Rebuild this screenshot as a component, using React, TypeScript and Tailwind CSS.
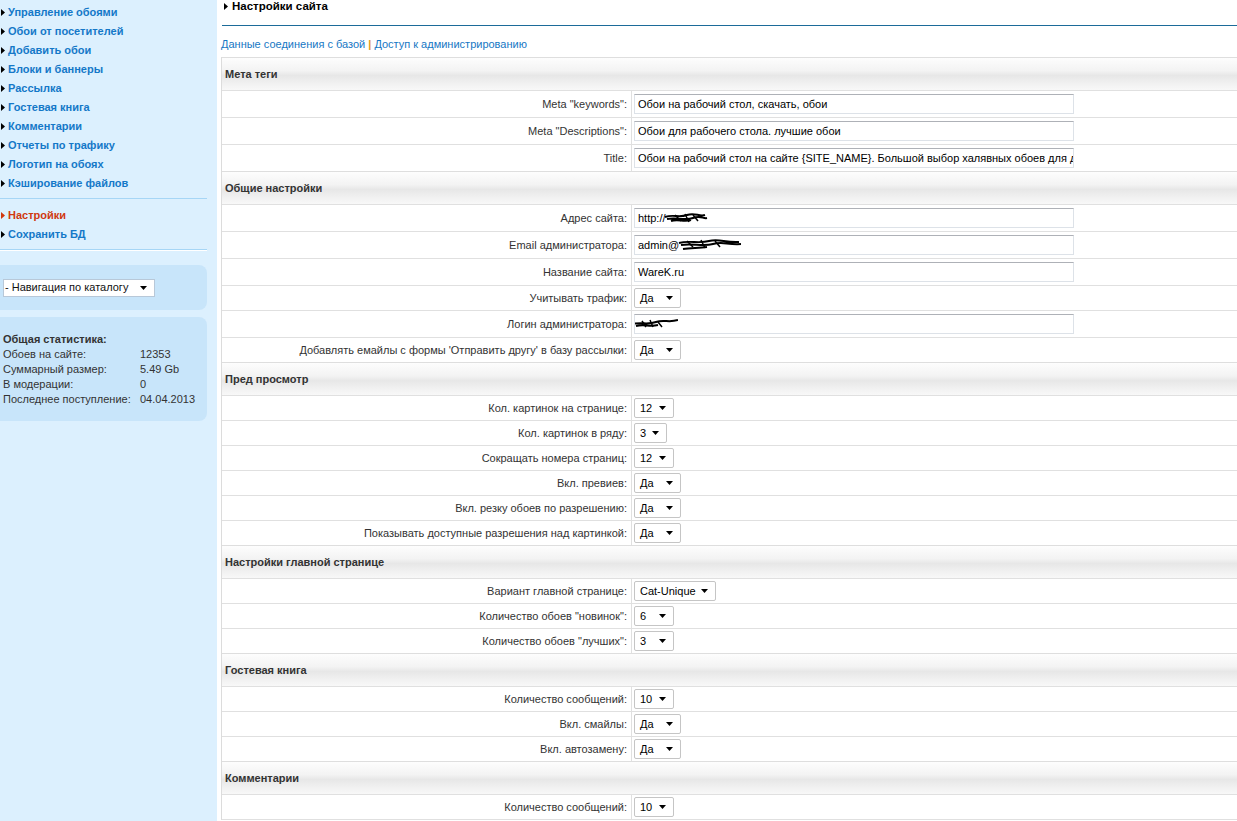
import React from "react";

type Row =
  | { label: string; kind: "input"; value: string; redact?: "url" | "email" | "login" }
  | { label: string; kind: "select"; value: string; width: string };

interface Section {
  title: string;
  rows: Row[];
}

const sections: Section[] = [
  {
    title: "Мета теги",
    rows: [
      { label: 'Meta "keywords":', kind: "input", value: "Обои на рабочий стол, скачать, обои" },
      { label: 'Meta "Descriptions":', kind: "input", value: "Обои для рабочего стола. лучшие обои" },
      {
        label: "Title:",
        kind: "input",
        value: "Обои на рабочий стол на сайте {SITE_NAME}. Большой выбор халявных обоев для д",
      },
    ],
  },
  {
    title: "Общие настройки",
    rows: [
      { label: "Адрес сайта:", kind: "input", value: "http://", redact: "url" },
      { label: "Email администратора:", kind: "input", value: "admin@", redact: "email" },
      { label: "Название сайта:", kind: "input", value: "WareK.ru" },
      { label: "Учитывать трафик:", kind: "select", value: "Да", width: "w-[47px]" },
      { label: "Логин администратора:", kind: "input", value: "", redact: "login" },
      {
        label: "Добавлять емайлы с формы 'Отправить другу' в базу рассылки:",
        kind: "select",
        value: "Да",
        width: "w-[47px]",
      },
    ],
  },
  {
    title: "Пред просмотр",
    rows: [
      { label: "Кол. картинок на странице:", kind: "select", value: "12", width: "w-[40px]" },
      { label: "Кол. картинок в ряду:", kind: "select", value: "3", width: "w-[33px]" },
      { label: "Сокращать номера страниц:", kind: "select", value: "12", width: "w-[40px]" },
      { label: "Вкл. превиев:", kind: "select", value: "Да", width: "w-[47px]" },
      { label: "Вкл. резку обоев по разрешению:", kind: "select", value: "Да", width: "w-[47px]" },
      { label: "Показывать доступные разрешения над картинкой:", kind: "select", value: "Да", width: "w-[47px]" },
    ],
  },
  {
    title: "Настройки главной странице",
    rows: [
      { label: "Вариант главной странице:", kind: "select", value: "Cat-Unique", width: "w-[82px]" },
      { label: 'Количество обоев "новинок":', kind: "select", value: "6", width: "w-[40px]" },
      { label: 'Количество обоев "лучших":', kind: "select", value: "3", width: "w-[40px]" },
    ],
  },
  {
    title: "Гостевая книга",
    rows: [
      { label: "Количество сообщений:", kind: "select", value: "10", width: "w-[40px]" },
      { label: "Вкл. смайлы:", kind: "select", value: "Да", width: "w-[47px]" },
      { label: "Вкл. автозамену:", kind: "select", value: "Да", width: "w-[47px]" },
    ],
  },
  {
    title: "Комментарии",
    rows: [{ label: "Количество сообщений:", kind: "select", value: "10", width: "w-[40px]" }],
  },
];

const navLinks = [
  "Управление обоями",
  "Обои от посетителей",
  "Добавить обои",
  "Блоки и баннеры",
  "Рассылка",
  "Гостевая книга",
  "Комментарии",
  "Отчеты по трафику",
  "Логотип на обоях",
  "Кэширование файлов",
];

const stats = [
  ["Обоев на сайте:", "12353"],
  ["Суммарный размер:", "5.49 Gb"],
  ["В модерации:", "0"],
  ["Последнее поступление:", "04.04.2013"],
];

const Arrow = () => (
  <svg width="7" height="4" viewBox="0 0 7 4" className="shrink-0">
    <path d="M0 0h7L3.5 4z" fill="#000" />
  </svg>
);

const Bullet = ({ color = "#000" }: { color?: string }) => (
  <svg width="4" height="7" viewBox="0 0 4 7" className="shrink-0">
    <path d="M0 0l4 3.5L0 7z" fill={color} />
  </svg>
);

// redaction scribbles drawn over the private values
const Scribble = ({ kind }: { kind: "url" | "email" | "login" }) => {
  if (kind === "url")
    return (
      <svg width="56" height="14" viewBox="0 0 56 14" className="-ml-[3px]">
        <path d="M2 6c8-3 14 1 22-2s12 2 18 0M4 8c10-2 18 2 26-1s10 1 14 0M8 10c6-2 14 1 20-1" stroke="#000" strokeWidth="2" fill="none" />
        <path d="M12 4l6 6M22 3l4 8M30 4l5 6" stroke="#000" strokeWidth="1.5" />
      </svg>
    );
  if (kind === "email")
    return (
      <svg width="70" height="16" viewBox="0 0 70 16" className="-ml-[2px]">
        <path d="M2 6c10-3 20 1 30-2s16 2 30 1M4 8c12-2 22 2 32-1s14 1 28 0M6 12c8-1 16-1 24-2" stroke="#000" strokeWidth="2" fill="none" />
        <path d="M10 4l6 6M24 3l4 8M38 4l5 6" stroke="#000" strokeWidth="1.5" />
      </svg>
    );
  return (
    <svg width="46" height="14" viewBox="0 0 46 14" className="-ml-[6px]">
      <path d="M0 7c10-2 16 1 24-2s12 1 22-2M4 9c8-2 14 1 22-1" stroke="#000" strokeWidth="2" fill="none" />
      <path d="M10 4l4 6M18 3l3 7M26 5l4 5" stroke="#000" strokeWidth="1.5" />
    </svg>
  );
};

const SelectBox = ({ value, width }: { value: string; width: string }) => (
  <div
    className={`${width} h-[20px] flex items-center justify-between pl-[5px] pr-[7px] bg-white border border-[#c5c5c5] rounded-[2px] text-black`}
  >
    <span>{value}</span>
    <Arrow />
  </div>
);

const InputBox = ({ value, redact }: { value: string; redact?: "url" | "email" | "login" }) => (
  <div className="w-[440px] h-[20px] flex items-center pl-[3px] bg-white border border-[#dde2e8] border-t-[#aeb1b7] text-black whitespace-nowrap overflow-hidden">
    <span>{value}</span>
    {redact && <Scribble kind={redact} />}
  </div>
);

export default function App() {
  return (
    <div
      className="flex min-h-screen bg-white text-[11px] leading-[13px] text-[#333]"
      style={{ fontFamily: '"Liberation Sans", Arial, sans-serif' }}
    >
      {/* sidebar */}
      <aside className="w-[217px] shrink-0 bg-[#dcf0fe] pt-[3px]">
        <ul className="w-[207px]">
          {navLinks.map((l) => (
            <li key={l} className="h-[19px] flex items-center gap-[3px] pl-[1px] font-bold text-[#1478c8]">
              <Bullet />
              <span>{l}</span>
            </li>
          ))}
        </ul>
        <div className="w-[207px] h-px bg-[#a6d6f6] mt-[5px]" />
        <ul className="w-[207px] mt-[7px]">
          <li className="h-[19px] flex items-center gap-[3px] pl-[1px] font-bold text-[#d0380e]">
            <Bullet color="#d0380e" />
            <span>Настройки</span>
          </li>
          <li className="h-[19px] flex items-center gap-[3px] pl-[1px] font-bold text-[#1478c8]">
            <Bullet />
            <span>Сохранить БД</span>
          </li>
        </ul>
        <div className="w-[207px] h-px bg-[#a6d6f6] mt-[5px]" />
        <div className="w-[207px] h-px bg-white" />

        <div className="w-[207px] h-[45px] mt-[14px] bg-[#c8e5fa] rounded-r-[8px] flex items-center pl-[3px]">
          <div className="w-[152px] h-[18px] bg-white border border-[#b8c8d8] flex items-center justify-between pl-[1px] pr-[7px] text-[#111]">
            <span>- Навигация по каталогу</span>
            <Arrow />
          </div>
        </div>

        <div className="w-[207px] mt-[7px] bg-[#c8e5fa] rounded-r-[8px] pt-[15px] pb-[14px] pl-[3px] leading-[15px] text-[#333]">
          <div className="font-bold">Общая статистика:</div>
          {stats.map(([k, v]) => (
            <div key={k} className="flex">
              <span className="w-[137px]">{k}</span>
              <span>{v}</span>
            </div>
          ))}
        </div>
      </aside>

      {/* main */}
      <main className="flex-1 pl-[4px]">
        <div className="h-[13px] flex items-center gap-[4px] pl-[3px] font-bold text-black">
          <Bullet />
          <span className="text-[11.5px]">Настройки сайта</span>
        </div>
        <div className="h-px bg-[#1c6b99] mt-[12px] ml-[1px]" />
        <div className="mt-[12px] h-[13px] text-[#1677c4]">
          <span>Данные соединения с базой</span>
          <span className="text-[#e39a1c] font-bold"> | </span>
          <span>Доступ к администрированию</span>
        </div>

        <div className="mt-[6px] border-l border-[#dcdcdc]">
          {sections.map((s) => (
            <div key={s.title}>
              <div className="h-[33px] flex items-center pl-[3px] font-bold text-[#333] border-t border-[#dedede] bg-[linear-gradient(to_bottom,#fdfdfd_0%,#f3f3f3_40%,#e7e7e7_55%,#f1f1f1_80%,#f8f8f8_100%)]">
                {s.title}
              </div>
              {s.rows.map((r, i) => (
                <div
                  key={i}
                  className={`flex border-t border-[#e0e0e0] ${r.kind === "input" ? "h-[27px]" : "h-[25px]"}`}
                >
                  <div className="w-[410px] shrink-0 flex items-center justify-end pr-[4px] border-r border-[#e0e0e0] text-[#333]">
                    {r.label}
                  </div>
                  <div className="flex-1 flex items-center pl-[2px]">
                    {r.kind === "input" ? (
                      <InputBox value={r.value} redact={r.redact} />
                    ) : (
                      <SelectBox value={r.value} width={r.width} />
                    )}
                  </div>
                </div>
              ))}
            </div>
          ))}
          <div className="border-t border-[#e0e0e0]" />
        </div>
      </main>
    </div>
  );
}
